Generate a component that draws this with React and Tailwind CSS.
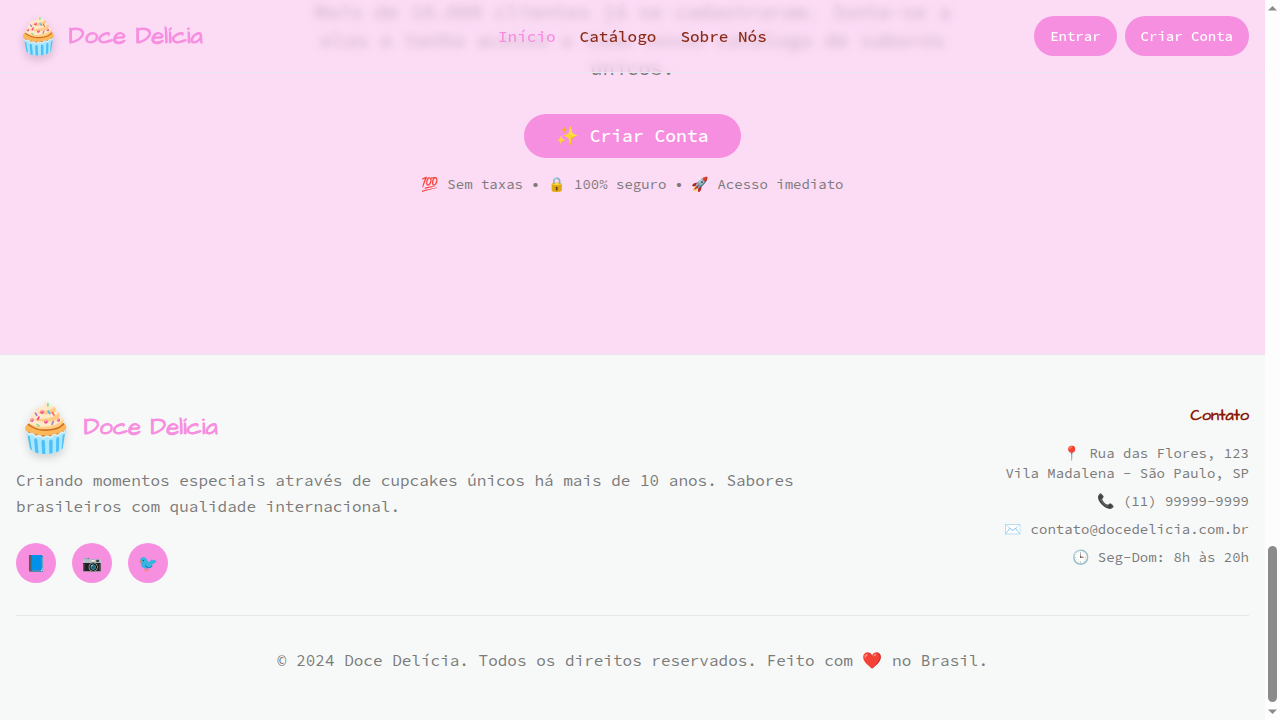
const socials = ['📘', '📷', '🐦']

function Logo({ emojiClass }) {
  return (
    <div className="flex items-center gap-2">
      <span className={`drop-shadow-lg ${emojiClass}`}>🧁</span>
      <span className="font-['Architects_Daughter'] text-2xl font-bold text-[#f78fe0]">Doce Delícia</span>
    </div>
  )
}

function Scrollbar() {
  return (
    <div className="flex h-screen w-[15px] shrink-0 flex-col items-center bg-[#fdfdfd]">
      <svg width="15" height="15" viewBox="0 0 15 15" className="shrink-0">
        <path d="M3 10.5 L7.5 6 L12 10.5 Z" fill="#8b8b8b" />
      </svg>
      <div className="flex flex-1 flex-col justify-end pb-[3px]">
        <div className="h-[156px] w-[9px] rounded-full bg-[#8b8b8b]" />
      </div>
      <svg width="15" height="15" viewBox="0 0 15 15" className="shrink-0">
        <path d="M3 4.5 L7.5 9 L12 4.5 Z" fill="#8b8b8b" />
      </svg>
    </div>
  )
}

export default function App() {
  return (
    <div className="flex h-screen overflow-hidden font-['Source_Code_Pro','Noto_Color_Emoji',monospace] text-[#7a7a7a]">
      <div className="relative flex h-screen min-w-0 flex-1 flex-col justify-end overflow-hidden">
        <nav className="absolute inset-x-0 top-0 z-10 flex items-center justify-between border-b border-[#e8e4f0] bg-[#fcdbf5]/60 px-4 py-4 backdrop-blur-[4px]">
          <Logo emojiClass="text-4xl" />
          <div className="ml-7 flex gap-6 font-medium text-[#8b2a15]">
            <a className="text-[#f78fe0]">Início</a>
            <a>Catálogo</a>
            <a>Sobre Nós</a>
          </div>
          <div className="flex gap-2 text-sm font-medium text-white">
            <button className="rounded-3xl bg-[#f78fe0] px-4 py-2.5">Entrar</button>
            <button className="rounded-3xl bg-[#f78fe0] px-4 py-2.5">Criar Conta</button>
          </div>
        </nav>

        <section className="shrink-0 bg-[#fcdbf5] pb-40 text-center">
          <p className="mx-auto mb-8 max-w-2xl text-xl">
            Mais de 10.000 clientes já se cadastraram. Junte-se a elas e tenha acesso a todo nosso catálogo de sabores únicos.
          </p>
          <button className="rounded-3xl bg-[#f78fe0] px-8 py-2 text-lg font-medium text-white">✨ Criar Conta</button>
          <p className="mt-4 text-sm">
            💯 Sem taxas • <span className="font-['Noto_Color_Emoji']">🔒</span> 100% seguro • 🚀 Acesso imediato
          </p>
        </section>

        <footer className="shrink-0 border-t border-[#e8e4f0] bg-[#f7f9f8] px-4 pt-12 pb-12">
          <div className="mb-8 grid grid-cols-3 gap-8">
            <div className="col-span-2">
              <div className="mb-4">
                <Logo emojiClass="text-5xl" />
              </div>
              <p className="mb-6 leading-relaxed">
                Criando momentos especiais através de cupcakes únicos há mais de 10 anos. Sabores brasileiros com qualidade internacional.
              </p>
              <div className="flex gap-4">
                {socials.map((icon) => (
                  <a key={icon} className="flex h-10 w-10 items-center justify-center rounded-full bg-[#f78fe0]">
                    {icon}
                  </a>
                ))}
              </div>
            </div>
            <div className="text-right text-sm">
              <h3 className="mb-4 font-['Architects_Daughter'] text-base font-bold text-[#8b1a05]">Contato</h3>
              <div className="space-y-2">
                <p>📍 Rua das Flores, 123<br />Vila Madalena - São Paulo, SP</p>
                <p>📞 (11) 99999-9999</p>
                <p>✉️ contato@docedelicia.com.br</p>
                <p>🕒 Seg-Dom: 8h às 20h</p>
              </div>
            </div>
          </div>
          <div className="border-t border-[#e5e7eb] pt-8 text-center">
            © 2024 Doce Delícia. Todos os direitos reservados. Feito com ❤️ no Brasil.
          </div>
        </footer>
      </div>
      <Scrollbar />
    </div>
  )
}
